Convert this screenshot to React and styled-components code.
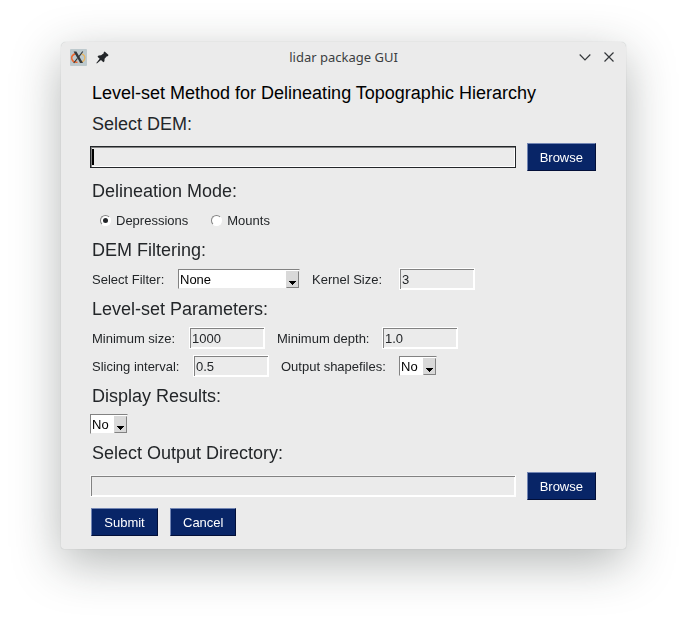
import React, { useState } from "react";
import styled, { createGlobalStyle, css } from "styled-components";

const Global = createGlobalStyle`
  *, *::before, *::after { box-sizing: border-box; }
  body { margin: 0; background: #ffffff; }
  button, input, select { font: inherit; margin: 0; }
`;

const Desktop = styled.main`
  min-height: 100vh;
  padding: 42px 61px 79px;
  font-family: "Liberation Sans", Arial, sans-serif;
  font-size: 13px;
  color: #232629;
`;

const Window = styled.section`
  background: #ebebeb;
  border-radius: 5px 5px 3px 3px;
  box-shadow: 0 0 1px rgba(35, 45, 42, 0.3), 0 14px 48px rgba(35, 45, 42, 0.34);
`;

const TitleBar = styled.header`
  display: grid;
  grid-template-columns: 60px 1fr 60px;
  align-items: center;
  height: 30px;
  padding: 0 9px;
`;

const TitleGroup = styled.div`
  display: flex;
  align-items: center;
  gap: 7px;
  justify-content: ${(p) => (p.$end ? "flex-end" : "flex-start")};
`;

const TitleText = styled.span`
  text-align: center;
  font-family: "Noto Sans", sans-serif;
  font-size: 13px;
  color: #3b3e41;
`;

const IconButton = styled.button`
  display: flex;
  align-items: center;
  justify-content: center;
  width: 17px;
  height: 18px;
  padding: 0;
  border: 0;
  background: none;
`;

const Form = styled.form`
  display: flex;
  flex-direction: column;
  gap: 6px;
  padding: 8px 29px 12px;
`;

const Heading = styled.h2`
  margin: 0;
  padding: 2px 2px 0;
  font-size: 18px;
  line-height: 23px;
  font-weight: 400;
  color: #232629;
`;

const Title = styled(Heading).attrs({ as: "h1" })`
  color: #000000;
`;

const Row = styled.div`
  display: flex;
  align-items: center;
  gap: 10px;
`;

const Label = styled.label`
  flex: 0 0 ${(p) => p.$width}px;
  padding: 0 2px;
  white-space: nowrap;
`;

const TextInput = styled.input`
  height: 22px;
  padding: 0 2px;
  border: 1px solid #ffffff;
  border-radius: 0;
  outline: none;
  background: #ebebeb;
  color: #232629;
  box-shadow: inset 1px 1px #828282, inset -1px -1px #ffffff;
  ${(p) => (p.$path ? css`flex: 1 1 0; min-width: 0; border-color: #f5f5f5 #ffffff #ffffff #f5f5f5;` : css`width: 76px;`)}
  &:focus {
    border-color: #232629;
    caret-color: transparent;
    background: linear-gradient(#000000, #000000) 1px 2px / 2px 16px no-repeat #ebebeb;
  }
`;

const Button = styled.button`
  height: 28px;
  min-width: ${(p) => (p.$minWidth || 0)}px;
  margin: 1px;
  padding: 0 12px;
  border: 1px solid;
  border-color: #7386b4 #020f38 #020f38 #7386b4;
  border-radius: 0;
  background: #082567;
  color: #ffffff;
`;

const RadioRow = styled(Row)`
  height: 22px;
  padding-left: 10px;
  gap: 23px;
`;

const RadioLabel = styled.label`
  display: flex;
  align-items: center;
  gap: 5px;
`;

const Radio = styled.input`
  appearance: none;
  display: grid;
  place-items: center;
  width: 11px;
  height: 11px;
  border: 1px solid;
  border-color: #828282 #ffffff #ffffff #828282;
  border-radius: 50%;
  background: #ffffff;
  &:checked::before {
    content: "";
    width: 5px;
    height: 5px;
    border-radius: 50%;
    background: #232629;
  }
`;

const SelectBox = styled.span`
  position: relative;
  display: flex;
  width: ${(p) => (p.$wide ? 122 : 38)}px;
  height: 20px;
`;

const Select = styled.select`
  appearance: none;
  width: 100%;
  padding: 0 14px 0 1px;
  border: 1px solid;
  border-color: #828282 #ebebeb #ebebeb #828282;
  border-radius: 0;
  background: #ffffff;
  color: #000000;
`;

const Arrow = styled.span`
  position: absolute;
  top: 2px;
  right: 1px;
  bottom: 1px;
  width: 13px;
  display: flex;
  align-items: flex-end;
  justify-content: center;
  padding-bottom: 2px;
  background: #d9d9d9;
  border: 1px solid;
  border-color: #d9d9d9 #828282 #828282 #d9d9d9;
  pointer-events: none;
`;

function Dropdown({ id, wide, options }) {
  return (
    <SelectBox $wide={wide}>
      <Select id={id}>
        {options.map((o) => <option key={o}>{o}</option>)}
      </Select>
      <Arrow>
        <svg width="7" height="4" viewBox="0 0 7 4" shapeRendering="crispEdges" aria-hidden="true">
          <path d="M0 0H7V1H6V2H5V3H4V4H3V3H2V2H1V1H0Z" fill="#000" />
        </svg>
      </Arrow>
    </SelectBox>
  );
}

function Field({ id, label, width, value }) {
  return (
    <>
      <Label htmlFor={id} $width={width}>{label}</Label>
      <TextInput id={id} defaultValue={value} />
    </>
  );
}

function XLogo() {
  return (
    <svg width="17" height="17" viewBox="0 0 17 17" aria-hidden="true">
      <rect width="17" height="17" rx="1" fill="#bdc9cd" />
      <path d="M5.4 4.8C2.6 5.8 1.2 8 1.9 10.2C2.6 12.4 5 13.4 7.5 13.2" fill="none" stroke="#ee652c" strokeWidth="1.5" />
      <path d="M11.5 4.8C14.2 5.8 15.3 7.8 14.6 10C13.9 12 11.7 13.3 9.5 13.3" fill="none" stroke="#e9b45f" strokeWidth="1.3" />
      <path d="M3.6 2.5H6.4L13 14H10.2Z" fill="#34383b" />
      <path d="M12.8 2.5L8.9 7.6M7.5 9.3L3.7 14" stroke="#34383b" strokeWidth="1.1" />
    </svg>
  );
}

function App() {
  const [mode, setMode] = useState("Depressions");
  return (
    <Desktop>
      <Global />
      <Window>
        <TitleBar>
          <TitleGroup>
            <XLogo />
            <IconButton type="button" aria-label="Pin window">
              <svg width="13" height="13" viewBox="0 0 12 12" aria-hidden="true">
                <path d="M8 0.5L11.6 3.7L10.8 4.8L10 4.8L7.9 7.2L7.8 9.4L6.8 10.4L4.6 8.4L0.8 11.6L0.3 11.1L3.4 7.2L1.4 5.2L2.4 4.1L4.7 4L7.2 2L7.1 1.2Z" fill="#232629" />
              </svg>
            </IconButton>
          </TitleGroup>
          <TitleText>lidar package GUI</TitleText>
          <TitleGroup $end>
            <IconButton type="button" aria-label="Minimize">
              <svg width="12" height="12" viewBox="0 0 12 12" aria-hidden="true">
                <path d="M0.7 3.5L6 8.8L11.3 3.5" fill="none" stroke="#34373a" strokeWidth="1.2" />
              </svg>
            </IconButton>
            <IconButton type="button" aria-label="Close">
              <svg width="10" height="10" viewBox="0 0 10 10" aria-hidden="true">
                <path d="M0.5 0.5L9.5 9.5M9.5 0.5L0.5 9.5" stroke="#34373a" strokeWidth="1.2" />
              </svg>
            </IconButton>
          </TitleGroup>
        </TitleBar>
        <Form onSubmit={(e) => e.preventDefault()}>
          <Title>Level-set Method for Delineating Topographic Hierarchy</Title>
          <Heading as="label" htmlFor="dem">Select DEM:</Heading>
          <Row>
            <TextInput id="dem" $path autoFocus />
            <Button type="button">Browse</Button>
          </Row>
          <Heading>Delineation Mode:</Heading>
          <RadioRow>
            {["Depressions", "Mounts"].map((m) => (
              <RadioLabel key={m}>
                <Radio type="radio" name="mode" checked={mode === m} onChange={() => setMode(m)} />
                {m}
              </RadioLabel>
            ))}
          </RadioRow>
          <Heading>DEM Filtering:</Heading>
          <Row>
            <Label htmlFor="filter" $width={78}>Select Filter:</Label>
            <Dropdown id="filter" wide options={["None", "Mean Filter", "Median Filter", "Gaussian Filter"]} />
            <Field id="kernel" label="Kernel Size:" width={79} value="3" />
          </Row>
          <Heading>Level-set Parameters:</Heading>
          <Row>
            <Field id="size" label="Minimum size:" width={89} value="1000" />
            <Field id="depth" label="Minimum depth:" width={97} value="1.0" />
          </Row>
          <Row>
            <Field id="interval" label="Slicing interval:" width={93} value="0.5" />
            <Label htmlFor="shapefiles" $width={110}>Output shapefiles:</Label>
            <Dropdown id="shapefiles" options={["No", "Yes"]} />
          </Row>
          <Heading as="label" htmlFor="display">Display Results:</Heading>
          <Dropdown id="display" options={["No", "Yes"]} />
          <Heading as="label" htmlFor="output">Select Output Directory:</Heading>
          <Row>
            <TextInput id="output" $path />
            <Button type="button">Browse</Button>
          </Row>
          <Row>
            <Button type="submit" $minWidth={67}>Submit</Button>
            <Button type="button">Cancel</Button>
          </Row>
        </Form>
      </Window>
    </Desktop>
  );
}

export default App;
